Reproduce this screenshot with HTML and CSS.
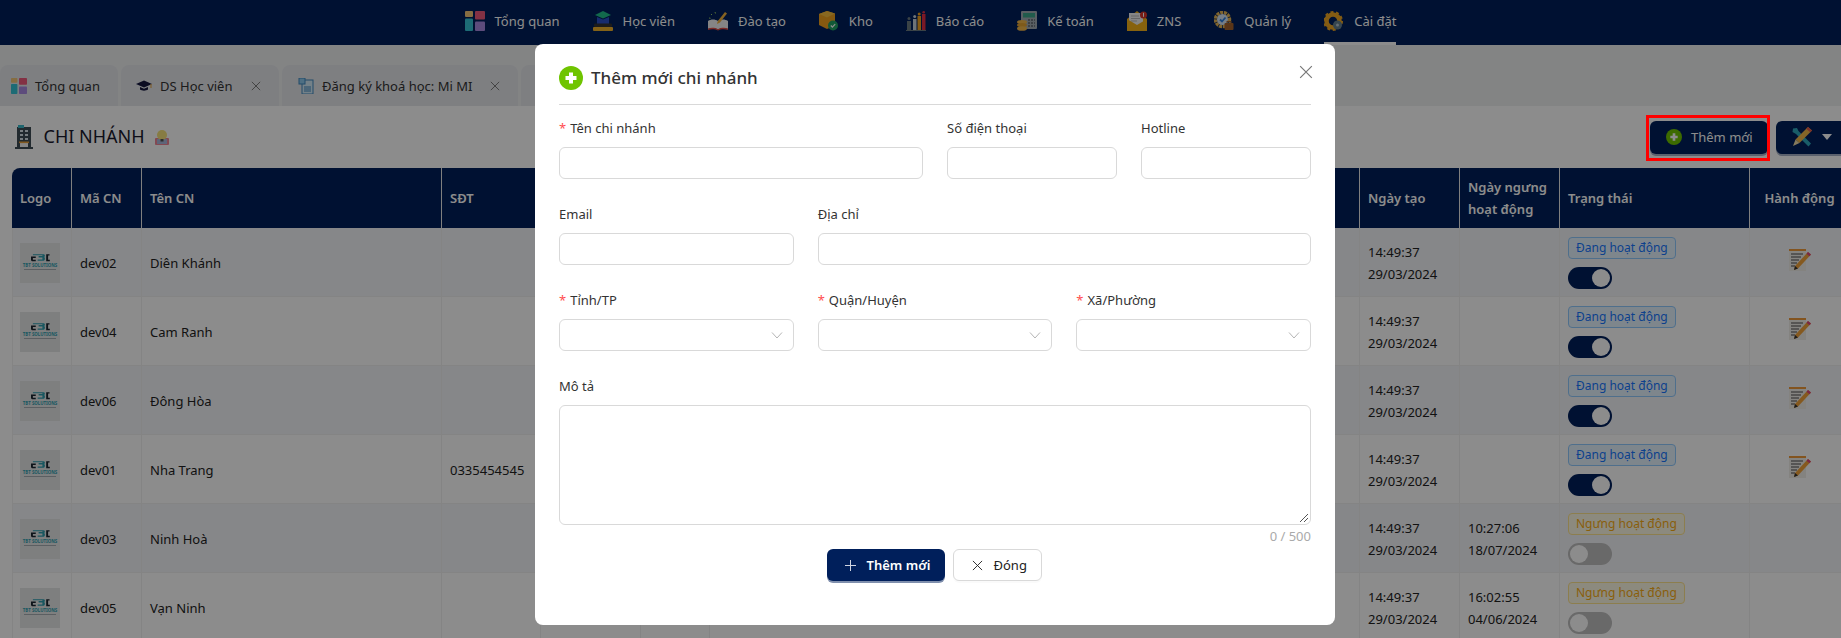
FILE: index.html
```html
<!DOCTYPE html>
<html lang="vi">
<head>
<meta charset="utf-8">
<title>Chi nhánh</title>
<link rel="stylesheet" href="styles.css">
</head>
<body>
<svg class="defs" width="0" height="0">
  <symbol id="i-grid" viewBox="0 0 20 20">
    <rect x="0" y="0" width="8" height="6" rx="1" fill="#f2c678"/>
    <rect x="10" y="0" width="10" height="8.500" rx="1" fill="#ef5a7c"/>
    <rect x="0" y="7.500" width="8" height="12.500" rx="1" fill="#35c3d6"/>
    <rect x="10" y="10.500" width="10" height="9.500" rx="1" fill="#a98be2"/>
  </symbol>
  <symbol id="i-mark" viewBox="0 0 20 9">
    <path d="M2 1h11c2 0 2 2 1 3 1 1 1 4-1 4H7V6.500h5v-2H8V3h4V2H2z" fill="#2f9fb0"/>
    <path d="M0 3.500h5V5H2v1.800h3V8.500H1l-1-1z" fill="#1a2530"/>
    <path d="M16 1h3.500v1.500H18v4.300h1.800v1.700H16z" fill="#1a2530"/>
  </symbol>
  <symbol id="i-edit" viewBox="0 0 22 22">
    <rect x="0" y="1" width="17" height="21" fill="#f0eeea"/>
    <rect x="0" y="0" width="17" height="2" fill="#ee9a3a"/>
    <path d="M2 5h12M2 8h10M2 11h8M2 14h6M2 17h4" stroke="#4a4a4a" stroke-width="1"/>
    <path d="M19 3l3 2.500-13 14-4 1.500 1-4z" fill="#f2a33a"/>
    <path d="M19 3l3 2.500-1.500 1.800-3-2.600z" fill="#e0467c"/>
    <path d="M6 17l3 2.500-4 1.500z" fill="#333"/>
  </symbol>
  <symbol id="i-x" viewBox="0 0 12 12">
    <path d="M1 1l10 10M11 1l-10 10" fill="none" stroke="currentColor" stroke-width="1"/>
  </symbol>
  <symbol id="i-chev" viewBox="0 0 12 12">
    <path d="M1 3.500l5 5.500 5-5.500" fill="none" stroke="currentColor" stroke-width="1"/>
  </symbol>
  <symbol id="i-plusc" viewBox="0 0 24 24">
    <circle cx="12" cy="12" r="12" fill="#6fc400"/>
    <path d="M12 6.500v11M6.500 12h11" stroke="#fff" stroke-width="4"/>
  </symbol>
</svg>

<div class="page">
  <header class="topnav">
    <a class="nav-item"><svg class="nav-ic"><use href="#i-grid"/></svg><span>Tổng quan</span></a>
    <a class="nav-item">
      <svg class="nav-ic" viewBox="0 0 20 20"><path d="M2 4l8-4 8 4-8 3.500z" fill="#22c08a"/><path d="M4 6l6 2.500L16 6v7H4z" fill="#2b50c8"/><rect x="1" y="12.500" width="18" height="3.500" rx="1" fill="#333"/><rect x="0" y="16" width="20" height="4" rx="1" fill="#f0b32a"/></svg>
      <span>Học viên</span></a>
    <a class="nav-item">
      <svg class="nav-ic" viewBox="0 0 20 20"><path d="M0 10c3-2 7-2 10 0 3-2 7-2 10 0v8c-3-1-7-1-10 .5C7 17 3 17 0 18z" fill="#f2f2f2"/><path d="M0 17.500c3-1 7-1 10 .8 3-1.800 7-1.800 10-.8v1.500c-3-1-7-1-10 .5-3-1.500-7-1.500-10-.5z" fill="#e04b45"/><path d="M17 1l2 1.500-7 9-3 1.500.8-3z" fill="#f3b33c"/><path d="M3 3l1 1M7 1l.500 1.500M1 7l1.500.300" stroke="#9c6" stroke-width="1"/></svg>
      <span>Đào tạo</span></a>
    <a class="nav-item">
      <svg class="nav-ic" viewBox="0 0 20 20"><path d="M8 0l8 2.500v12L8 18 0 14V3z" fill="#f2a21e"/><path d="M8 0L0 3l8 3.500L16 2.500z" fill="#f7bd3c"/><circle cx="14" cy="14.500" r="5" fill="#1fa365"/><path d="M11.800 14.500l1.600 1.600 2.800-3" stroke="#fff" stroke-width="1.300" fill="none"/></svg>
      <span>Kho</span></a>
    <a class="nav-item">
      <svg class="nav-ic" viewBox="0 0 20 20"><rect x="1" y="10" width="4" height="9" fill="#6b7a80"/><rect x="7" y="8" width="3.500" height="11" fill="#c9d4da"/><rect x="11.500" y="5" width="3.500" height="14" fill="#f2a21e"/><rect x="16" y="3" width="3.500" height="16" fill="#e02f45"/><circle cx="3" cy="7.500" r="1.500" fill="#6b7a80"/><circle cx="8.700" cy="5.500" r="1.500" fill="#c9d4da"/><circle cx="13.200" cy="3" r="1.500" fill="#f2a21e"/><circle cx="17.700" cy="1.300" r="1.300" fill="#e02f45"/><rect x="0" y="19" width="20" height="1" fill="#6b7a80"/></svg>
      <span>Báo cáo</span></a>
    <a class="nav-item">
      <svg class="nav-ic" viewBox="0 0 20 20"><rect x="4" y="0" width="16" height="18" rx="1" fill="#a4adb5"/><rect x="6" y="2" width="12" height="4.500" fill="#3ca78a"/><path d="M11 9h7M11 12h7M11 15h7" stroke="#5d666e" stroke-width="1.500" stroke-dasharray="2 1"/><ellipse cx="5" cy="11" rx="5" ry="2" fill="#f3b84a"/><ellipse cx="5" cy="14" rx="5" ry="2" fill="#e6a431"/><ellipse cx="5" cy="17.500" rx="5" ry="2.300" fill="#f3b84a"/></svg>
      <span>Kế toán</span></a>
    <a class="nav-item">
      <svg class="nav-ic" viewBox="0 0 20 20"><path d="M0 8l10-8 10 8v12H0z" fill="#f6b21b"/><path d="M2 2h14v11l-6 3-8-3z" fill="#f4f4f4"/><path d="M4 5h8M4 7.500h9M4 10h6" stroke="#bbb"/><path d="M0 8l10 6 10-6v12H0z" fill="#f6b21b"/><circle cx="16.500" cy="4" r="3.500" fill="#d9342b"/><rect x="16" y="1.800" width="1" height="4" fill="#fff"/></svg>
      <span>ZNS</span></a>
    <a class="nav-item">
      <svg class="nav-ic" viewBox="0 0 20 20"><circle cx="8.500" cy="8.500" r="7" fill="none" stroke="#e6b655" stroke-width="3.500" stroke-dasharray="3 .8"/><circle cx="8.500" cy="8.500" r="5.500" fill="#d6e6f6"/><path d="M6 8.500l2 2 3.500-4" stroke="#2f80e0" stroke-width="1.800" fill="none"/><rect x="10.500" y="12" width="9" height="7" rx="1" fill="#a5622b"/><rect x="13" y="10.500" width="4" height="2" fill="none" stroke="#a5622b"/></svg>
      <span>Quản lý</span></a>
    <a class="nav-item is-active">
      <svg class="nav-ic" viewBox="0 0 20 20"><circle cx="9" cy="10" r="6.500" fill="none" stroke="#f0a823" stroke-width="4.500"/><circle cx="9" cy="10" r="9" fill="none" stroke="#f0a823" stroke-width="2" stroke-dasharray="3 2.650"/><circle cx="13.500" cy="14" r="4.500" fill="#64808f"/><circle cx="13.500" cy="14" r="1.500" fill="#b8c6cf"/></svg>
      <span>Cài đặt</span></a>
  </header>

  <nav class="tabs">
    <div class="tab tab-1"><svg class="tab-ic"><use href="#i-grid"/></svg><span>Tổng quan</span></div>
    <div class="tab tab-2">
      <svg class="tab-ic" viewBox="0 0 16 16"><path d="M0 6l8-3.500L16 6l-8 3.500z" fill="#14163f"/><path d="M4 9v2.500c2 1.500 6 1.500 8 0V9l-4 1.800z" fill="#14163f"/><path d="M15 6v4" stroke="#e8a33a"/></svg>
      <span>DS Học viên</span><svg class="tab-x"><use href="#i-x"/></svg></div>
    <div class="tab tab-3">
      <svg class="tab-ic" viewBox="0 0 16 16"><rect x="4" y="2" width="11" height="14" fill="#d4ebf7" stroke="#3f88c0"/><rect x="1" y="0" width="6" height="6" fill="#8ecbee" stroke="#3f88c0"/><path d="M6 9h7M6 11h7M6 13h7" stroke="#3f88c0"/></svg>
      <span>Đăng ký khoá học: Mi MI</span><svg class="tab-x"><use href="#i-x"/></svg></div>
    <div class="tab tab-4"></div>
  </nav>

  <main class="content">
    <div class="title-row">
      <svg class="title-ic" viewBox="0 0 18 24"><rect x="2" y="2" width="14" height="20" fill="#3f4e57"/><rect x="3" y="0" width="6" height="3" fill="#3ab8c8"/><path d="M5 6h3M10 6h3M5 10h3M10 10h3M5 14h3M10 14h3" stroke="#d8e2e8" stroke-width="1.800"/><rect x="5" y="17" width="8" height="5" fill="#f2f2f2"/><rect x="4" y="16.500" width="10" height="1.600" fill="#e9a13b"/><rect x="0" y="22" width="18" height="2" fill="#3f4e57"/></svg>
      <h1 class="title">CHI NHÁNH</h1>
      <svg class="title-hint" viewBox="0 0 14 16"><rect x="0" y="9" width="14" height="7" rx="1" fill="#ee8595"/><rect x="2" y="10" width="10" height="5" fill="#aab8dc"/><circle cx="7" cy="6" r="5" fill="#f6e27a"/><rect x="5.500" y="10" width="3" height="2.500" fill="#555"/></svg>
      <div class="title-actions">
        <button class="btn-dark btn-add"><svg class="add-ic"><use href="#i-plusc"/></svg>Thêm mới</button>
        <button class="btn-dark btn-tools">
          <svg class="tools-ic" viewBox="0 0 20 20"><path d="M1 1.500l4-.5 1.500 3L19 16.500 16.500 19.500 4 7 .5 5z" fill="#2fa9bd"/><path d="M16 0l4 3.500L7.500 16 3.500 12.500z" fill="#f0b84a"/><path d="M16 0l4 3.500-1.800 1.700-4-3.500z" fill="#e2584d"/><path d="M3.500 12.500l4 3.500-6.500 3z" fill="#f3dfa8"/></svg>
          <span class="caret"></span></button>
      </div>
    </div>

    <table class="grid">
      <colgroup>
        <col class="c-logo"><col class="c-code"><col class="c-name"><col class="c-phone"><col class="c-e1"><col class="c-e2"><col class="c-e3"><col class="c-date"><col class="c-stop"><col class="c-state"><col class="c-act">
      </colgroup>
      <thead>
        <tr><th>Logo</th><th>Mã CN</th><th>Tên CN</th><th>SĐT</th><th></th><th></th><th></th><th>Ngày tạo</th><th>Ngày ngưng<br>hoạt động</th><th>Trạng thái</th><th class="center">Hành động</th></tr>
      </thead>
      <tbody>
        <tr><td><div class="logo"><svg class="logo-mark"><use href="#i-mark"/></svg><span class="logo-text">TBT SOLUTIONS</span><i class="logo-rule"></i></div></td><td>dev02</td><td>Diên Khánh</td><td></td><td></td><td></td><td></td><td>14:49:37<br>29/03/2024</td><td></td><td><span class="badge on">Đang hoạt động</span><span class="switch on"></span></td><td class="center"><svg class="edit"><use href="#i-edit"/></svg></td></tr>
        <tr><td><div class="logo"><svg class="logo-mark"><use href="#i-mark"/></svg><span class="logo-text">TBT SOLUTIONS</span><i class="logo-rule"></i></div></td><td>dev04</td><td>Cam Ranh</td><td></td><td></td><td></td><td></td><td>14:49:37<br>29/03/2024</td><td></td><td><span class="badge on">Đang hoạt động</span><span class="switch on"></span></td><td class="center"><svg class="edit"><use href="#i-edit"/></svg></td></tr>
        <tr><td><div class="logo"><svg class="logo-mark"><use href="#i-mark"/></svg><span class="logo-text">TBT SOLUTIONS</span><i class="logo-rule"></i></div></td><td>dev06</td><td>Đông Hòa</td><td></td><td></td><td></td><td></td><td>14:49:37<br>29/03/2024</td><td></td><td><span class="badge on">Đang hoạt động</span><span class="switch on"></span></td><td class="center"><svg class="edit"><use href="#i-edit"/></svg></td></tr>
        <tr><td><div class="logo"><svg class="logo-mark"><use href="#i-mark"/></svg><span class="logo-text">TBT SOLUTIONS</span><i class="logo-rule"></i></div></td><td>dev01</td><td>Nha Trang</td><td>0335454545</td><td></td><td></td><td></td><td>14:49:37<br>29/03/2024</td><td></td><td><span class="badge on">Đang hoạt động</span><span class="switch on"></span></td><td class="center"><svg class="edit"><use href="#i-edit"/></svg></td></tr>
        <tr><td><div class="logo"><svg class="logo-mark"><use href="#i-mark"/></svg><span class="logo-text">TBT SOLUTIONS</span><i class="logo-rule"></i></div></td><td>dev03</td><td>Ninh Hoà</td><td></td><td></td><td></td><td></td><td>14:49:37<br>29/03/2024</td><td>10:27:06<br>18/07/2024</td><td><span class="badge off">Ngưng hoạt động</span><span class="switch"></span></td><td></td></tr>
        <tr><td><div class="logo"><svg class="logo-mark"><use href="#i-mark"/></svg><span class="logo-text">TBT SOLUTIONS</span><i class="logo-rule"></i></div></td><td>dev05</td><td>Vạn Ninh</td><td></td><td></td><td></td><td></td><td>14:49:37<br>29/03/2024</td><td>16:02:55<br>04/06/2024</td><td><span class="badge off">Ngưng hoạt động</span><span class="switch"></span></td><td></td></tr>
      </tbody>
    </table>
  </main>
</div>

<div class="overlay">
  <div class="highlight"></div>
  <section class="modal">
    <svg class="modal-close"><use href="#i-x"/></svg>
    <h2 class="modal-title"><svg class="modal-ic"><use href="#i-plusc"/></svg><span class="modal-title-text">Thêm mới chi nhánh</span></h2>
    <form class="form">
      <div class="field s6"><label class="req">Tên chi nhánh</label><div class="input"></div></div>
      <div class="field s3"><label>Số điện thoại</label><div class="input"></div></div>
      <div class="field s3"><label>Hotline</label><div class="input"></div></div>
      <div class="field s4"><label>Email</label><div class="input"></div></div>
      <div class="field s8"><label>Địa chỉ</label><div class="input"></div></div>
      <div class="field s4"><label class="req">Tỉnh/TP</label><div class="input select"><svg class="chev"><use href="#i-chev"/></svg></div></div>
      <div class="field s4"><label class="req">Quận/Huyện</label><div class="input select"><svg class="chev"><use href="#i-chev"/></svg></div></div>
      <div class="field s4"><label class="req">Xã/Phường</label><div class="input select"><svg class="chev"><use href="#i-chev"/></svg></div></div>
      <div class="field s12"><label>Mô tả</label>
        <div class="input area"><svg class="grip" viewBox="0 0 10 10"><path d="M9 1L1 9M9 5L5 9" stroke="#555" fill="none"/></svg></div>
        <div class="count">0 / 500</div></div>
    </form>
    <div class="modal-actions">
      <button class="btn-primary"><span class="plus"></span>Thêm mới</button>
      <button class="btn-ghost"><svg class="btn-x"><use href="#i-x"/></svg>Đóng</button>
    </div>
  </section>
</div>
</body>
</html>
```
FILE: styles.css
```css
* { box-sizing: border-box; }
html, body { margin: 0; height: 100%; overflow: hidden; }
body { font-family: "Noto Sans", "Open Sans", sans-serif; font-size: 13px; color: #222; background: #fff; }
.defs { position: absolute; }

.page { width: 1850px; }
.topnav { height: 45px; background: #001f5b; display: flex; justify-content: center; gap: 33px; padding-left: 11px; color: #fff; font-size: 13px; }
.nav-item { display: flex; align-items: center; gap: 10px; height: 45px; border-bottom: 3px solid transparent; }
.nav-item.is-active { border-bottom-color: #fff; }
.nav-ic { width: 20px; height: 20px; }

.tabs { height: 61px; background: #eff1f1; padding-top: 20px; display: flex; gap: 3px; }
.tab { height: 41px; background: #e6e8ec; border-radius: 8px 8px 0 0; display: flex; align-items: center; color: #333; }
.tab-1 { width: 117.5px; padding-left: 11px; }
.tab-2 { width: 158px; padding-left: 15.5px; }
.tab-3 { width: 236.5px; padding-left: 16.5px; }
.tab-4 { width: 300px; }
.tab-ic { width: 16px; height: 16px; margin-right: 8px; flex: none; }
.tab-x { width: 10px; height: 10px; color: #666; margin-left: auto; margin-right: 18px; flex: none; }

.content { padding: 0 0 0 12px; }
.title-row { height: 62px; display: flex; align-items: center; }
.title-ic { width: 18px; height: 24px; margin: 0 11px 0 2.5px; }
.title { margin: 0 0 2px; font-size: 18px; font-weight: 400; color: #1a1a2e; line-height: 24px; }
.title-hint { width: 14px; height: 16px; margin-left: 10px; }
.title-actions { margin-left: auto; display: flex; gap: 8px; }
.btn-dark { height: 33px; background: #001f5b; color: #fff; border: 0; border-radius: 6px; box-shadow: 0 2px 0 rgba(0, 31, 91, .35); font: inherit; display: flex; align-items: center; padding: 0; }
.btn-add { width: 118px; padding-left: 16px; gap: 9px; }
.add-ic { width: 16px; height: 16px; }
.btn-tools { width: 74px; padding-left: 16px; gap: 10px; }
.tools-ic { width: 20px; height: 20px; }
.caret { width: 0; height: 0; border: 5px solid transparent; border-top: 6px solid #fff; border-bottom: 0; }

.grid { width: 1838px; table-layout: fixed; border-collapse: separate; border-spacing: 0; font-size: 13px; }
.c-logo { width: 60px; } .c-code { width: 70px; } .c-name { width: 300px; } .c-phone { width: 99px; }
.c-e1 { width: 100px; } .c-e2 { width: 69px; } .c-e3 { width: 650px; } .c-date { width: 100px; }
.c-stop { width: 100px; } .c-state { width: 190px; } .c-act { width: 100px; }
.grid th { height: 60px; background: #001f5b; color: #fff; font-weight: 600; text-align: left; padding: 0 8px; line-height: 22px; border-right: 1px solid #e8e8e8; }
.grid th:first-child { border-top-left-radius: 8px; }
.grid td { height: 69px; padding: 2px 8px 0; line-height: 22px; border-right: 1px solid #f0f0f0; border-bottom: 1px solid #f0f0f0; color: #222; background: #fff; }
.grid td:first-child { border-left: 1px solid #f0f0f0; padding-left: 7px; }
.grid tbody tr:nth-child(odd) td { background: #f5f6fa; }
.grid th.center, .grid td.center { text-align: center; }
.logo { width: 40px; height: 40px; background: #e6e7e8; display: flex; flex-direction: column; align-items: center; padding-top: 10px; }
.logo-mark { width: 19px; height: 9px; display: block; }
.logo-text { display: block; margin-top: 1px; font-size: 4.4px; line-height: 5px; font-weight: 700; color: #2f9fb0; white-space: nowrap; }
.logo-rule { display: block; width: 32px; height: 1px; background: #a6adb2; margin-top: 1px; }
.edit { width: 22px; height: 22px; display: block; margin: 0 auto 6px; }
.badge { display: block; width: max-content; height: 22px; line-height: 20px; font-size: 12px; padding: 0 7px; border: 1px solid; border-radius: 4px; margin-bottom: 8px; }
.badge.on { color: #1677ff; background: #e6f4ff; border-color: #91caff; }
.badge.off { color: #faad14; background: #fffbe6; border-color: #ffe58f; }
.switch { display: block; position: relative; width: 44px; height: 22px; border-radius: 11px; background: #bfbfbf; }
.switch.on { background: #001f5b; }
.switch::after { content: ""; position: absolute; top: 2px; left: 2px; width: 18px; height: 18px; border-radius: 50%; background: #fff; }
.switch.on::after { left: 24px; }

.overlay { position: fixed; inset: 0; background: rgba(0, 0, 0, .45); display: flex; justify-content: flex-start; align-items: flex-start; padding: 44px 0 0 535px; }
.highlight { position: absolute; left: 1646px; top: 115px; width: 124px; height: 46px; border: 3px solid #f00; }
.modal { position: relative; width: 800px; height: 581px; background: #fff; border-radius: 8px; padding: 22px 24px 0; }
.modal-close { position: absolute; top: 21px; right: 22px; width: 14px; height: 14px; color: #777; }
.modal-title { margin: 0 0 12px; padding-bottom: 14px; border-bottom: 1px solid #d9d9d9; display: flex; align-items: center; gap: 8px; font-size: 17px; font-weight: 500; color: #333; box-sizing: content-box; height: 24px; }
.modal-title-text { margin-bottom: 2px; }
.modal-ic { width: 24px; height: 24px; }
.form { display: grid; grid-template-columns: repeat(12, 1fr); column-gap: 24px; row-gap: 24px; }
.s3 { grid-column: span 3; } .s4 { grid-column: span 4; } .s6 { grid-column: span 6; } .s8 { grid-column: span 8; } .s12 { grid-column: span 12; }
.field label { display: block; height: 22px; line-height: 22px; margin-bottom: 8px; font-size: 13px; color: #333; }
.req::before { content: "*"; color: #ff4d4f; margin-right: 4px; }
.input { position: relative; height: 32px; border: 1px solid #d9d9d9; border-radius: 6px; background: #fff; }
.input.area { height: 120px; }
.chev { position: absolute; right: 10px; top: 9px; width: 12px; height: 12px; color: #b5b5b5; }
.grip { position: absolute; right: 1px; bottom: 1px; width: 10px; height: 10px; }
.count { text-align: right; height: 21px; line-height: 22px; color: #aaa; font-size: 13px; }
.modal-actions { display: flex; justify-content: center; gap: 8px; margin-top: 3px; padding-right: 2px; }
.btn-primary { width: 118px; height: 32px; background: #001f5b; color: #fff; border: 0; border-radius: 6px; box-shadow: 0 2px 0 rgba(0, 31, 91, .5); font: inherit; font-weight: 600; display: flex; align-items: center; padding: 0 0 0 18px; gap: 11px; }
.plus { width: 11px; height: 11px; background: linear-gradient(#cfd5e2, #cfd5e2) center / 100% 1px no-repeat, linear-gradient(#cfd5e2, #cfd5e2) center / 1px 100% no-repeat; }
.btn-ghost { width: 89px; height: 32px; background: #fff; color: #222; border: 1px solid #d9d9d9; border-radius: 6px; box-shadow: 0 2px 0 rgba(0, 0, 0, .02); font: inherit; display: flex; align-items: center; padding: 0 0 0 18px; gap: 11px; }
.btn-x { width: 11px; height: 11px; color: #222; }
```
